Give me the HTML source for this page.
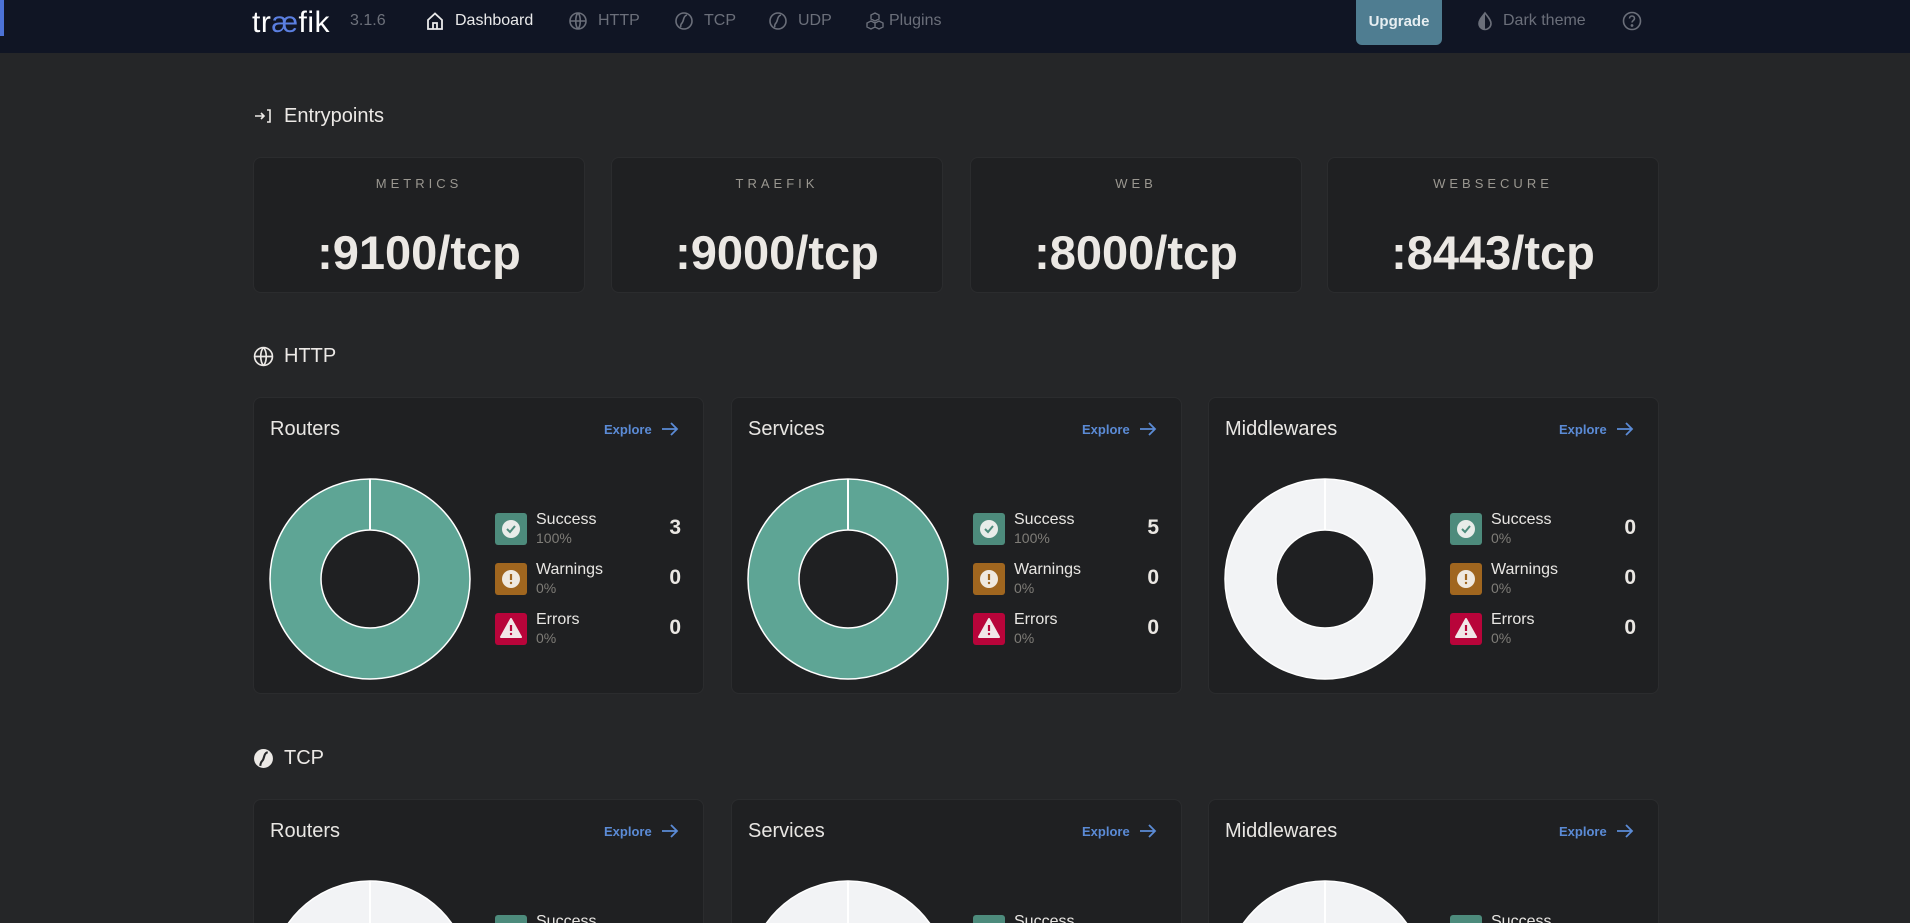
<!DOCTYPE html>
<html><head><meta charset="utf-8"><style>
*{box-sizing:border-box;margin:0;padding:0}
html,body{width:1910px;height:923px;overflow:hidden;background:#252628}
body{font-family:"Liberation Sans",sans-serif;color:#e8e6e3}
#w{position:relative;width:1910px;height:923px;overflow:hidden;background:#252628}
.abs{position:absolute}
.hdr{left:0;top:0;width:1910px;height:53px;background:#101524}
.bar{left:0;top:0;width:4px;height:36px;background:#4c72d6}
.nav{top:11px;font-size:16px;color:#6b6f7a;line-height:20px;white-space:nowrap}
.nav svg{position:absolute;left:-30px;top:0}
.st{font-size:20px;color:#ece9e6;line-height:24px}
.ep{width:332px;height:136px;background:#1f2022;border:1px solid #2b2c2e;border-radius:8px;top:157px}
.ep .l{position:absolute;top:18px;width:100%;text-align:center;font-size:13px;letter-spacing:4px;color:#9a9790}
.ep .v{position:absolute;top:67px;width:100%;text-align:center;font-size:47px;font-weight:bold;color:#ebe8e4;letter-spacing:0px}
.card{width:451px;height:297px;background:#1f2022;border:1px solid #2b2c2e;border-radius:8px}
.card .t{position:absolute;left:16px;top:20px;font-size:20px;color:#e8e6e3}
.card .x{position:absolute;left:350px;top:24px;font-size:13px;color:#5b8bd6;font-weight:bold}
.card .x svg{position:absolute;left:56px;top:-1px}
.card .d{position:absolute;left:15px;top:80px}
.ic{position:absolute;left:241px;width:32px;height:32px;border-radius:3px}
.lb{position:absolute;left:282px;font-size:16px;color:#e8e6e3;line-height:18px}
.lb span{display:block;font-size:14px;color:#7f7d78;line-height:18px}
.n{position:absolute;right:22px;font-size:21px;font-weight:bold;color:#eae7e3}
</style></head><body><div id="w">
<div class="abs hdr"></div><div class="abs bar"></div>
<div class="abs" style="left:252px;top:6px;font-size:30px;color:#fff;letter-spacing:0.5px">tr<span style="color:#5b7fe0">æ</span>fik</div>
<div class="abs nav" style="left:350px;color:#6d717b">3.1.6</div>
<div class="abs nav" style="left:455px;color:#e9e9ea"><svg width="20" height="20" viewBox="0 0 20 20" fill="none" stroke="#e9e9ea" stroke-width="1.8"><path d="M3 9L10 2.5 17 9V18H3Z"/><path d="M8 18V12h4v6"/></svg>Dashboard</div>
<div class="abs nav" style="left:598px"><svg width="20" height="20" viewBox="0 0 20 20" fill="none" stroke="#6b6f7a" stroke-width="1.6"><circle cx="10" cy="10" r="8"/><path d="M2 10h16M10 2c-3 3-3 13 0 16M10 2c3 3 3 13 0 16"/></svg>HTTP</div>
<div class="abs nav" style="left:704px"><svg width="20" height="20" viewBox="0 0 20 20" fill="none" stroke="#6b6f7a" stroke-width="1.6"><circle cx="10" cy="10" r="8"/><path d="M13 4c-4 1-3 6-5 8s-1 4-1 4"/></svg>TCP</div>
<div class="abs nav" style="left:798px"><svg width="20" height="20" viewBox="0 0 20 20" fill="none" stroke="#6b6f7a" stroke-width="1.6"><circle cx="10" cy="10" r="8"/><path d="M13 4c-4 1-3 6-5 8s-1 4-1 4"/></svg>UDP</div>
<div class="abs nav" style="left:889px"><svg style="left:-24px" width="20" height="20" viewBox="0 0 20 20" fill="none" stroke="#6b6f7a" stroke-width="1.4"><path d="M10 2l4 2v4l-4 2-4-2V4z M6 10l4 2v4l-4 2-4-2v-4z M14 10l4 2v4l-4 2-4-2v-4z"/></svg>Plugins</div>
<div class="abs" style="left:1356px;top:0;width:86px;height:45px;background:#4f7d91;border-radius:0 0 6px 6px;color:#e6eef1;font-weight:bold;font-size:15px;text-align:center;line-height:44px">Upgrade</div>
<div class="abs nav" style="left:1503px"><svg style="left:-28px" width="20" height="20" viewBox="0 0 20 20"><path d="M10 2C7 6 4 9 4 12.5a6 6 0 0012 0C16 9 13 6 10 2z" fill="none" stroke="#6b6f7a" stroke-width="1.6"/><path d="M10 2C7 6 4 9 4 12.5a6 6 0 006 6z" fill="#6b6f7a"/></svg>Dark theme</div>
<div class="abs" style="left:1622px;top:11px"><svg width="20" height="20" viewBox="0 0 20 20" fill="none" stroke="#6b6f7a" stroke-width="1.6"><circle cx="10" cy="10" r="8.5"/><path d="M7.5 7.5a2.5 2.5 0 115 0c0 2-2.5 2-2.5 4"/><circle cx="10" cy="14.5" r="0.6" fill="#6b6f7a"/></svg></div>

<div class="abs" style="left:253px;top:106px"><svg width="20" height="20" viewBox="0 0 20 20" fill="none" stroke="#ece9e6" stroke-width="1.6"><path d="M2 10h9M8 7l3 3-3 3M14 4h3v12h-3"/></svg></div>
<div class="abs st" style="left:284px;top:104px">Entrypoints</div>
<div class="abs ep" style="left:253px"><div class="l">METRICS</div><div class="v">:9100/tcp</div></div>
<div class="abs ep" style="left:611px"><div class="l">TRAEFIK</div><div class="v">:9000/tcp</div></div>
<div class="abs ep" style="left:970px"><div class="l">WEB</div><div class="v">:8000/tcp</div></div>
<div class="abs ep" style="left:1327px"><div class="l">WEBSECURE</div><div class="v">:8443/tcp</div></div>

<div class="abs" style="left:253px;top:346px"><svg width="21" height="21" viewBox="0 0 20 20" fill="none" stroke="#ece9e6" stroke-width="1.6"><circle cx="10" cy="10" r="8.5"/><path d="M1.5 10h17M10 1.5c-3.5 3.5-3.5 13.5 0 17M10 1.5c3.5 3.5 3.5 13.5 0 17"/></svg></div>
<div class="abs st" style="left:284px;top:344px">HTTP</div>

<div class="abs card" style="left:253px;top:397px">
<div class="t">Routers</div><div class="x">Explore<svg width="20" height="16" viewBox="0 0 20 16" fill="none" stroke="#5b8bd6" stroke-width="1.8"><path d="M2 8h15M11 2l6 6-6 6"/></svg></div>
<svg class="d" width="202" height="202" viewBox="-101 -101 202 202"><circle r="100" fill="#5ea595" stroke="#fff" stroke-width="1.5"/><circle r="49" fill="#1f2022" stroke="#fff" stroke-width="1.5"/><path d="M0 -100V-49" stroke="#fff" stroke-width="2"/></svg>
<div class="ic" style="top:115px;background:#4d8b7c"><svg width="32" height="32"><circle cx="16" cy="16" r="9" fill="#e8ece9"/><path d="M12 16l3 3 5-6" fill="none" stroke="#4d8b7c" stroke-width="2"/></svg></div>
<div class="lb" style="top:113px">Success<span>100%</span></div><div class="n" style="top:118px">3</div>
<div class="ic" style="top:165px;background:#a0661f"><svg width="32" height="32"><circle cx="16" cy="16" r="9" fill="#efe9e0"/><path d="M16 11v6" stroke="#a0661f" stroke-width="2.2"/><circle cx="16" cy="20" r="1.2" fill="#a0661f"/></svg></div>
<div class="lb" style="top:163px">Warnings<span>0%</span></div><div class="n" style="top:168px">0</div>
<div class="ic" style="top:215px;background:#b8043a"><svg width="32" height="32"><path d="M16 6L26 24H6Z" fill="#f1e6e8" stroke="#f1e6e8" stroke-width="2" stroke-linejoin="round"/><path d="M16 12v6" stroke="#b8043a" stroke-width="2.2"/><circle cx="16" cy="21" r="1.2" fill="#b8043a"/></svg></div>
<div class="lb" style="top:213px">Errors<span>0%</span></div><div class="n" style="top:218px">0</div>
</div>

<div class="abs card" style="left:731px;top:397px">
<div class="t">Services</div><div class="x">Explore<svg width="20" height="16" viewBox="0 0 20 16" fill="none" stroke="#5b8bd6" stroke-width="1.8"><path d="M2 8h15M11 2l6 6-6 6"/></svg></div>
<svg class="d" width="202" height="202" viewBox="-101 -101 202 202"><circle r="100" fill="#5ea595" stroke="#fff" stroke-width="1.5"/><circle r="49" fill="#1f2022" stroke="#fff" stroke-width="1.5"/><path d="M0 -100V-49" stroke="#fff" stroke-width="2"/></svg>
<div class="ic" style="top:115px;background:#4d8b7c"><svg width="32" height="32"><circle cx="16" cy="16" r="9" fill="#e8ece9"/><path d="M12 16l3 3 5-6" fill="none" stroke="#4d8b7c" stroke-width="2"/></svg></div>
<div class="lb" style="top:113px">Success<span>100%</span></div><div class="n" style="top:118px">5</div>
<div class="ic" style="top:165px;background:#a0661f"><svg width="32" height="32"><circle cx="16" cy="16" r="9" fill="#efe9e0"/><path d="M16 11v6" stroke="#a0661f" stroke-width="2.2"/><circle cx="16" cy="20" r="1.2" fill="#a0661f"/></svg></div>
<div class="lb" style="top:163px">Warnings<span>0%</span></div><div class="n" style="top:168px">0</div>
<div class="ic" style="top:215px;background:#b8043a"><svg width="32" height="32"><path d="M16 6L26 24H6Z" fill="#f1e6e8" stroke="#f1e6e8" stroke-width="2" stroke-linejoin="round"/><path d="M16 12v6" stroke="#b8043a" stroke-width="2.2"/><circle cx="16" cy="21" r="1.2" fill="#b8043a"/></svg></div>
<div class="lb" style="top:213px">Errors<span>0%</span></div><div class="n" style="top:218px">0</div>
</div>

<div class="abs card" style="left:1208px;top:397px">
<div class="t">Middlewares</div><div class="x">Explore<svg width="20" height="16" viewBox="0 0 20 16" fill="none" stroke="#5b8bd6" stroke-width="1.8"><path d="M2 8h15M11 2l6 6-6 6"/></svg></div>
<svg class="d" width="202" height="202" viewBox="-101 -101 202 202"><circle r="100" fill="#f2f3f5" stroke="#fff" stroke-width="1.5"/><circle r="49" fill="#1f2022" stroke="#fff" stroke-width="1.5"/><path d="M0 -100V-49" stroke="#fff" stroke-width="2"/></svg>
<div class="ic" style="top:115px;background:#4d8b7c"><svg width="32" height="32"><circle cx="16" cy="16" r="9" fill="#e8ece9"/><path d="M12 16l3 3 5-6" fill="none" stroke="#4d8b7c" stroke-width="2"/></svg></div>
<div class="lb" style="top:113px">Success<span>0%</span></div><div class="n" style="top:118px">0</div>
<div class="ic" style="top:165px;background:#a0661f"><svg width="32" height="32"><circle cx="16" cy="16" r="9" fill="#efe9e0"/><path d="M16 11v6" stroke="#a0661f" stroke-width="2.2"/><circle cx="16" cy="20" r="1.2" fill="#a0661f"/></svg></div>
<div class="lb" style="top:163px">Warnings<span>0%</span></div><div class="n" style="top:168px">0</div>
<div class="ic" style="top:215px;background:#b8043a"><svg width="32" height="32"><path d="M16 6L26 24H6Z" fill="#f1e6e8" stroke="#f1e6e8" stroke-width="2" stroke-linejoin="round"/><path d="M16 12v6" stroke="#b8043a" stroke-width="2.2"/><circle cx="16" cy="21" r="1.2" fill="#b8043a"/></svg></div>
<div class="lb" style="top:213px">Errors<span>0%</span></div><div class="n" style="top:218px">0</div>
</div>

<div class="abs" style="left:253px;top:748px"><svg width="21" height="21" viewBox="0 0 20 20"><circle cx="10" cy="10" r="9" fill="#ece9e6"/><path d="M14 4c-4 1-3 6-5 8s-2 5-2 5" fill="none" stroke="#252628" stroke-width="2"/></svg></div>
<div class="abs st" style="left:284px;top:746px">TCP</div>

<div class="abs card" style="left:253px;top:799px">
<div class="t">Routers</div><div class="x">Explore<svg width="20" height="16" viewBox="0 0 20 16" fill="none" stroke="#5b8bd6" stroke-width="1.8"><path d="M2 8h15M11 2l6 6-6 6"/></svg></div>
<svg class="d" width="202" height="202" viewBox="-101 -101 202 202"><circle r="100" fill="#f2f3f5" stroke="#fff" stroke-width="1.5"/><circle r="49" fill="#1f2022" stroke="#fff" stroke-width="1.5"/><path d="M0 -100V-49" stroke="#fff" stroke-width="2"/></svg>
<div class="ic" style="top:115px;background:#4d8b7c"></div><div class="lb" style="top:113px">Success</div>
</div>
<div class="abs card" style="left:731px;top:799px">
<div class="t">Services</div><div class="x">Explore<svg width="20" height="16" viewBox="0 0 20 16" fill="none" stroke="#5b8bd6" stroke-width="1.8"><path d="M2 8h15M11 2l6 6-6 6"/></svg></div>
<svg class="d" width="202" height="202" viewBox="-101 -101 202 202"><circle r="100" fill="#f2f3f5" stroke="#fff" stroke-width="1.5"/><circle r="49" fill="#1f2022" stroke="#fff" stroke-width="1.5"/><path d="M0 -100V-49" stroke="#fff" stroke-width="2"/></svg>
<div class="ic" style="top:115px;background:#4d8b7c"></div><div class="lb" style="top:113px">Success</div>
</div>
<div class="abs card" style="left:1208px;top:799px">
<div class="t">Middlewares</div><div class="x">Explore<svg width="20" height="16" viewBox="0 0 20 16" fill="none" stroke="#5b8bd6" stroke-width="1.8"><path d="M2 8h15M11 2l6 6-6 6"/></svg></div>
<svg class="d" width="202" height="202" viewBox="-101 -101 202 202"><circle r="100" fill="#f2f3f5" stroke="#fff" stroke-width="1.5"/><circle r="49" fill="#1f2022" stroke="#fff" stroke-width="1.5"/><path d="M0 -100V-49" stroke="#fff" stroke-width="2"/></svg>
<div class="ic" style="top:115px;background:#4d8b7c"></div><div class="lb" style="top:113px">Success</div>
</div>
</div></body></html>
